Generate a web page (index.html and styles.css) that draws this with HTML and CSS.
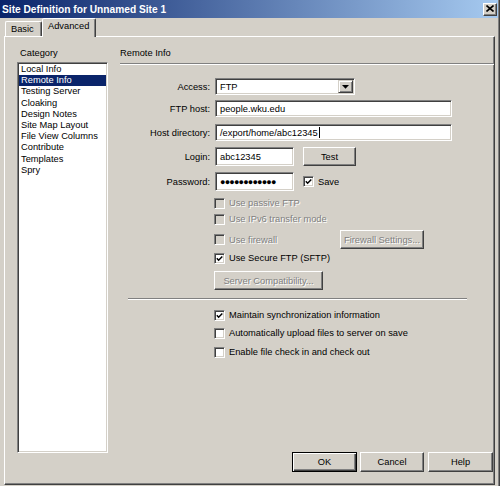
FILE: index.html
```html
<!DOCTYPE html>
<html>
<head>
<meta charset="utf-8">
<link rel="stylesheet" href="styles.css">
</head>
<body>
<div class="dialog">
  <div class="titlebar">
    <span class="title">Site Definition for Unnamed Site 1</span>
    <span class="close"><svg width="8" height="7" viewBox="0 0 8 7"><path d="M0.5 0.5 L7.5 6.5 M7.5 0.5 L0.5 6.5" stroke="#000" stroke-width="1.6"/></svg></span>
  </div>
  <div class="tabs">
    <div class="tab">Basic</div>
    <div class="tab active">Advanced</div>
  </div>
  <div class="panel">
    <div class="left">
      <div class="cat-label">Category</div>
      <ul class="list">
        <li>Local Info</li>
        <li class="sel">Remote Info</li>
        <li>Testing Server</li>
        <li>Cloaking</li>
        <li>Design Notes</li>
        <li>Site Map Layout</li>
        <li>File View Columns</li>
        <li>Contribute</li>
        <li>Templates</li>
        <li>Spry</li>
      </ul>
    </div>
    <div class="right">
      <div class="heading">Remote Info</div>

      <div class="row r1">
        <span class="lbl">Access:</span>
        <div class="field select">
          <span class="val">FTP</span>
          <span class="arrow"><svg width="7" height="4" viewBox="0 0 7 4"><polygon points="0,0 7,0 3.5,3.8" fill="#000"/></svg></span>
        </div>
      </div>
      <div class="row r2">
        <span class="lbl">FTP host:</span>
        <div class="field wide"><span class="val">people.wku.edu</span></div>
      </div>
      <div class="row r3">
        <span class="lbl">Host directory:</span>
        <div class="field wide"><span class="val">/export/home/abc12345</span><span class="caret"></span></div>
      </div>
      <div class="row r4">
        <span class="lbl">Login:</span>
        <div class="field short"><span class="val">abc12345</span></div>
        <div class="btn test">Test</div>
      </div>
      <div class="row r5">
        <span class="lbl">Password:</span>
        <div class="field short"><span class="val dots">●●●●●●●●●●●●</span></div>
        <span class="cb checked save-cb"><svg width="7" height="7" viewBox="0 0 7 7"><polyline points="0.8,3.3 2.6,5.2 6.3,1.4" fill="none" stroke="#000" stroke-width="1.5"/></svg></span>
        <span class="cb-text">Save</span>
      </div>

      <div class="opt o-passive disabled"><span class="cb"></span><span class="cb-text">Use passive FTP</span></div>
      <div class="opt o-ipv6 disabled"><span class="cb"></span><span class="cb-text">Use IPv6 transfer mode</span></div>
      <div class="opt o-firewall">
        <div class="fw disabled"><span class="cb"></span><span class="cb-text">Use firewall</span></div>
        <div class="btn disabled fw-btn">Firewall Settings...</div>
      </div>
      <div class="opt o-sftp"><span class="cb checked"><svg width="7" height="7" viewBox="0 0 7 7"><polyline points="0.8,3.3 2.6,5.2 6.3,1.4" fill="none" stroke="#000" stroke-width="1.5"/></svg></span><span class="cb-text">Use Secure FTP (SFTP)</span></div>
      <div class="opt o-compat"><div class="btn disabled compat-btn">Server Compatibility...</div></div>

      <div class="sep"></div>

      <div class="opt o-maintain"><span class="cb checked"><svg width="7" height="7" viewBox="0 0 7 7"><polyline points="0.8,3.3 2.6,5.2 6.3,1.4" fill="none" stroke="#000" stroke-width="1.5"/></svg></span><span class="cb-text">Maintain synchronization information</span></div>
      <div class="opt o-auto"><span class="cb"></span><span class="cb-text">Automatically upload files to server on save</span></div>
      <div class="opt o-enable"><span class="cb"></span><span class="cb-text">Enable file check in and check out</span></div>

      <div class="footer">
        <div class="btn default ok">OK</div>
        <div class="btn cancel">Cancel</div>
        <div class="btn help">Help</div>
      </div>
    </div>
  </div>
</div>
</body>
</html>
```
FILE: styles.css
```css
* { box-sizing: border-box; }
body {
  margin: 0;
  font-family: "Liberation Sans", Arial, sans-serif;
  font-size: 9.3px;
  color: #000;
  background: #d4d0c8;
}
.dialog {
  width: 500px;
  height: 486px;
  background: #d4d0c8;
  display: flex;
  flex-direction: column;
  border-right: 1px solid #404040;
  box-shadow: inset -1px 0 #808080;
}
.titlebar {
  height: 18px;
  width: 498px;
  background: linear-gradient(to right, #0a246a, #a6caf0);
  display: flex;
  align-items: center;
  padding-left: 2px;
  flex-shrink: 0;
}
.title {
  color: #fff;
  font-weight: bold;
  font-size: 10.2px;
}
.close {
  margin-left: auto;
  margin-right: 1px;
  width: 14px;
  height: 13px;
  background: #d4d0c8;
  border: 1px solid;
  border-color: #fff #404040 #404040 #fff;
  box-shadow: inset -1px -1px #808080;
  display: flex;
  align-items: center;
  justify-content: center;
}
.close svg { display: block; margin-top: -1px; }
.tabs {
  height: 18px;
  display: flex;
  align-items: flex-end;
  padding-left: 5px;
  flex-shrink: 0;
}
.tab {
  height: 15px;
  width: 37px;
  border: 1px solid;
  border-bottom: none;
  border-color: #fff #404040 transparent #fff;
  box-shadow: inset -1px 0 #808080;
  border-radius: 2px 2px 0 0;
  padding-left: 5px;
  padding-top: 2px;
  line-height: 11px;
}
.tab.active {
  height: 19px;
  width: 54px;
  margin-bottom: -1px;
  position: relative;
  z-index: 2;
  background: #d4d0c8;
  padding-top: 2px;
}
.panel {
  margin-left: 4px;
  width: 491px;
  height: 449px;
  border: 1px solid;
  border-color: #fff #404040 #404040 #fff;
  box-shadow: inset -1px -1px #808080;
  display: flex;
  padding-top: 10px;
  flex-shrink: 0;
}
.left {
  width: 91px;
  margin-left: 12px;
  display: flex;
  flex-direction: column;
}
.cat-label {
  height: 12px;
  line-height: 12px;
  padding-left: 3px;
}
.list {
  list-style: none;
  margin: 3px 0 0 0;
  height: 391px;
  background: #fff;
  border: 1px solid;
  border-color: #808080 #fff #fff #808080;
  box-shadow: inset 1px 1px #404040, inset -1px -1px #d4d0c8;
  padding: 1px;
}
.list li {
  height: 11.2px;
  line-height: 11.2px;
  padding-left: 2px;
  white-space: nowrap;
}
.list li.sel {
  background: #0a246a;
  color: #fff;
}
.right {
  flex: 1;
  margin-left: 12px;
  margin-right: 1px;
  display: flex;
  flex-direction: column;
}
.heading {
  height: 17px;
  line-height: 12px;
  border-bottom: 1px solid #808080;
  box-shadow: 0 1px #fff;
  margin-right: -1px;
}
.row {
  display: flex;
  align-items: center;
}
.lbl {
  width: 90px;
  text-align: right;
  margin-right: 5px;
  white-space: nowrap;
}
.r1 { margin-top: 14px; height: 17px; }
.r2 { margin-top: 5px; height: 17px; }
.r3 { margin-top: 7px; height: 17px; }
.r4 { margin-top: 6px; height: 19px; }
.r5 { margin-top: 6px; height: 19px; }
.field {
  height: 100%;
  background: #fff;
  border: 1px solid;
  border-color: #808080 #fff #fff #808080;
  box-shadow: inset 1px 1px #404040, inset -1px -1px #d4d0c8;
  display: flex;
  align-items: center;
  padding-left: 4px;
}
.select { width: 140px; }
.select .arrow {
  margin-left: auto;
  margin-right: 1px;
  width: 15px;
  height: 13px;
  background: #d4d0c8;
  border: 1px solid;
  border-color: #d4d0c8 #404040 #404040 #d4d0c8;
  box-shadow: inset 1px 1px #fff, inset -1px -1px #808080;
  display: flex;
  align-items: center;
  justify-content: center;
}
.select .arrow svg { display: block; }
.wide { width: 237px; }
.short { width: 79px; }
.caret {
  display: inline-block;
  width: 1px;
  height: 11px;
  background: #000;
  margin-left: 1px;
}
.dots {
  font-size: 9px;
  letter-spacing: -0.8px;
}
.btn {
  background: #d4d0c8;
  border: 1px solid;
  border-color: #fff #404040 #404040 #fff;
  box-shadow: inset -1px -1px #808080;
  display: flex;
  align-items: center;
  justify-content: center;
  white-space: nowrap;
}
.btn.disabled {
  color: #808080;
  text-shadow: 1px 1px #fff;
}
.btn.default {
  border: 1px solid #000;
  box-shadow: inset 1px 1px #fff, inset -1px -1px #404040, inset -2px -2px #808080;
}
.test { width: 53px; height: 19px; margin-left: 9px; }
.cb {
  width: 11px;
  height: 11px;
  flex-shrink: 0;
  background: #fff;
  border: 1px solid;
  border-color: #808080 #fff #fff #808080;
  box-shadow: inset 1px 1px #404040, inset -1px -1px #d4d0c8;
  display: flex;
  align-items: center;
  justify-content: center;
}
.cb svg { display: block; }
.disabled .cb { background: #d4d0c8; }
.cb-text { margin-left: 4px; white-space: nowrap; }
.disabled .cb-text { color: #808080; text-shadow: 1px 1px #fff; }
.save-cb { margin-left: 9px; }
.opt {
  display: flex;
  align-items: center;
  padding-left: 94px;
  height: 12px;
}
.o-passive { margin-top: 6px; }
.o-ipv6 { margin-top: 4px; }
.o-firewall { margin-top: 5px; height: 19px; }
.fw { display: flex; align-items: center; width: 126px; }
.fw-btn { width: 84px; height: 19px; }
.o-sftp { margin-top: 3px; }
.o-compat { margin-top: 7px; height: 19px; }
.compat-btn { width: 109px; height: 19px; }
.sep {
  margin-top: 8px;
  margin-left: 8px;
  margin-right: 26px;
  height: 2px;
  border-top: 1px solid #808080;
  border-bottom: 1px solid #fff;
}
.o-maintain { margin-top: 9px; }
.o-auto { margin-top: 6px; }
.o-enable { margin-top: 7px; }
.footer {
  margin-top: auto;
  margin-bottom: 12px;
  display: flex;
  justify-content: flex-end;
}
.footer .btn { height: 20px; }
.ok { width: 65px; }
.cancel { width: 64px; margin-left: 3px; }
.help { width: 65px; margin-left: 4px; }
```
